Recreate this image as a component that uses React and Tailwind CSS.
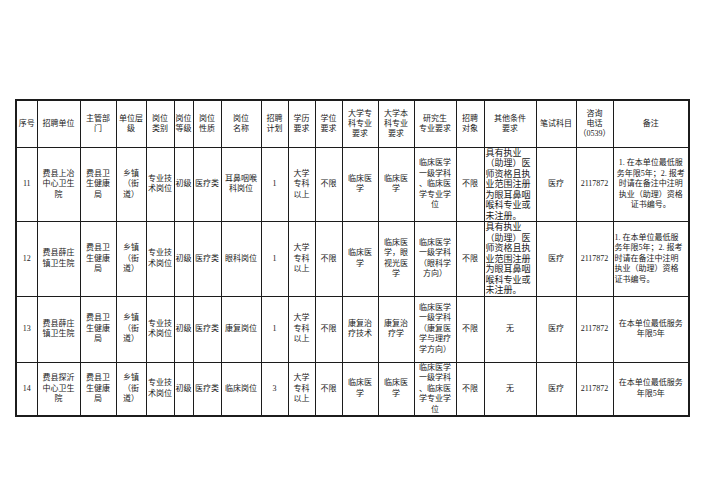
import React from "react";

const widths = [21, 43, 36, 30, 28, 19, 28, 40, 27, 27, 27, 36, 36, 42, 28, 52, 40, 37, 76];

const header = [
  "序号", "招聘单位", "主管部\n门", "单位层\n级", "岗位\n类别", "岗位\n等级", "岗位\n性质", "岗位\n名称",
  "招聘\n计划", "学历\n要求", "学位\n要求", "大学专\n科专业\n要求", "大学本\n科专业\n要求", "研究生\n专业要求",
  "招聘\n对象", "其他条件\n要求", "笔试科目", "咨询\n电话\n（0539）", "备注",
];

const cond = "具有执业\n（助理）医\n师资格且执\n业范围注册\n为眼耳鼻咽\n喉科专业或\n未注册。";
const remarkLong = "1. 在本单位最低服\n务年限5年；2. 报考\n时请在备注中注明\n执业（助理）资格\n证书编号。";
const remarkShort = "在本单位最低服务\n年限5年";

const common = ["费县卫\n生健康\n局", "乡镇\n（街\n道）", "专业技\n术岗位", "初级", "医疗类"];

const rows = [
  {
    h: "h-[72px]",
    cells: [
      "11", "费县上冶\n中心卫生\n院", ...common, "耳鼻咽喉\n科岗位", "1", "大学\n专科\n以上", "不限",
      "临床医\n学", "临床医\n学", "临床医学\n一级学科\n、临床医\n学专业学\n位", "不限",
      { t: cond, c: "text-left text-[9px] leading-[9.4px]" }, "医疗", "2117872",
      { t: remarkLong, c: "text-center leading-[10.5px]" },
    ],
  },
  {
    h: "h-[73px]",
    cells: [
      "12", "费县薛庄\n镇卫生院", ...common, "眼科岗位", "1", "大学\n专科\n以上", "不限",
      "临床医\n学", "临床医\n学，眼\n视光医\n学", "临床医学\n一级学科\n（眼科学\n方向）", "不限",
      { t: cond, c: "text-left text-[9px] leading-[9.4px]" }, "医疗", "2117872",
      { t: remarkLong, c: "text-left leading-[10.5px]" },
    ],
  },
  {
    h: "h-[66px]",
    cells: [
      "13", "费县薛庄\n镇卫生院", ...common, "康复岗位", "1", "大学\n专科\n以上", "不限",
      "康复治\n疗技术", "康复治\n疗学", "临床医学\n一级学科\n（康复医\n学与理疗\n学方向）", "不限",
      "无", "医疗", "2117872", remarkShort,
    ],
  },
  {
    h: "h-[52px]",
    cells: [
      "14", "费县探沂\n中心卫生\n院", ...common, "临床岗位", "3", "大学\n专科\n以上", "不限",
      "临床医\n学", "临床医\n学", "临床医学\n一级学科\n、临床医\n学专业学\n位", "不限",
      "无", "医疗", "2117872", remarkShort,
    ],
  },
];

function Lines({ text }) {
  const parts = text.split("\n");
  return parts.map((p, i) => (
    <React.Fragment key={i}>
      {p}
      {i < parts.length - 1 && <br />}
    </React.Fragment>
  ));
}

function Cell({ v, header }) {
  const text = typeof v === "string" ? v : v.t;
  const extra = typeof v === "string" ? "text-center" : v.c;
  return (
    <td
      className={`border border-[#1c1c1c] px-[1px] py-0 align-middle overflow-hidden whitespace-nowrap ${extra} ${
        header ? "leading-[10px]" : "leading-[10.5px]"
      }`}
    >
      <Lines text={text} />
    </td>
  );
}

export default function App() {
  return (
    <div
      className="w-[707px] h-[500px] bg-white pt-[99px] pl-[15px] text-[8px] text-[#1a1a1a]"
      style={{ fontFamily: '"Liberation Serif", "Noto Sans CJK SC", serif' }}
    >
      <table className="table-fixed border-collapse w-[673px] border-2 border-[#1c1c1c]">
        <colgroup>
          {widths.map((w, i) => (
            <col key={i} style={{ width: w }} />
          ))}
        </colgroup>
        <tbody>
          <tr className="h-[47px]">
            {header.map((h, i) => (
              <Cell key={i} v={h} header />
            ))}
          </tr>
          {rows.map((r, ri) => (
            <tr key={ri} className={r.h}>
              {r.cells.map((c, ci) => (
                <Cell key={ci} v={c} />
              ))}
            </tr>
          ))}
        </tbody>
      </table>
    </div>
  );
}
